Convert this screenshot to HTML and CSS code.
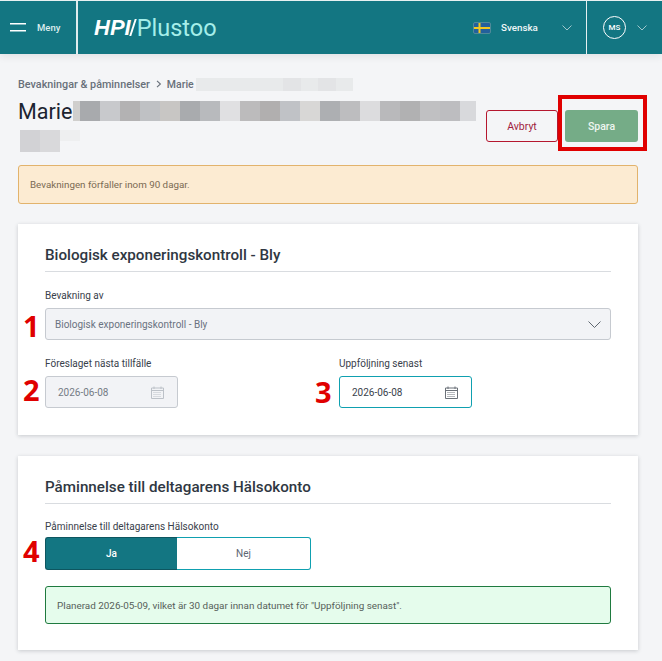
FILE: index.html
```html
<!DOCTYPE html>
<html lang="sv">
<head>
<meta charset="utf-8">
<title>Bevakning</title>
<link rel="stylesheet" href="styles.css">
</head>
<body>
<header class="topbar">
  <button class="menu">
    <svg class="burger" width="16" height="9" viewBox="0 0 16 9"><path d="M0 .75h16M0 7.75h16" stroke="#fff" stroke-width="1.5"/></svg>
    <span>Meny</span>
  </button>
  <div class="logo"><span class="hpi">HPI</span><span class="slash"></span><span class="plustoo">Plustoo</span></div>
  <div class="lang">
    <svg class="flag" width="18" height="12" viewBox="0 0 18 12"><rect x=".5" y=".5" width="17" height="11" rx="1.5" fill="#23609c" stroke="#4f8a99"/><path d="M1 6h16M6.500 1v10" stroke="#f2c81e" stroke-width="2"/></svg>
    <span>Svenska</span>
    <svg class="chev" width="10" height="6" viewBox="0 0 10 6"><path d="M.5.500l4.500 4.500 4.500-4.500" fill="none" stroke="#9fc7cc"/></svg>
  </div>
  <div class="user">
    <span class="avatar">MS</span>
    <svg class="chev" width="10" height="6" viewBox="0 0 10 6"><path d="M.5.500l4.500 4.500 4.500-4.500" fill="none" stroke="#9fc7cc"/></svg>
  </div>
</header>

<main class="page">
  <nav class="crumbs">
    <span>Bevakningar &amp; påminnelser</span>
    <svg width="6" height="8" viewBox="0 0 6 8"><path d="M1 .8l3.400 3.200L1 7.200" fill="none" stroke="#68707a" stroke-width="1.100"/></svg>
    <span class="crumb-name">Marie</span>
    <span class="mosaic crumb-mosaic"><i></i><i></i><i></i><i></i><i></i><i></i><i></i><i></i><i></i></span>
  </nav>

  <div class="titlerow">
    <h1>
      <span class="name">Marie</span>
      <span class="mosaic title-mosaic"><i></i><i></i><i></i><i></i><i></i><i></i><i></i><i></i><i></i><i></i><i></i><i></i><i></i><i></i><i></i><i></i><i></i><i></i><i></i><i></i></span>
      <span class="mosaic second-mosaic"><i></i><i></i><i></i></span>
    </h1>
    <div class="actions">
      <button class="btn cancel">Avbryt</button>
      <button class="btn save">Spara</button>
      <span class="redbox"></span>
    </div>
  </div>

  <div class="alert warn">Bevakningen förfaller inom 90 dagar.</div>

  <section class="card first">
    <h2>Biologisk exponeringskontroll - Bly</h2>
    <div class="field">
      <label>Bevakning av</label>
      <div class="control select">
        <span>Biologisk exponeringskontroll - Bly</span>
        <svg width="13" height="7" viewBox="0 0 13 7"><path d="M.5.500l6 6 6-6" fill="none" stroke="#5f6770"/></svg>
        <b class="mark m1">1</b>
      </div>
    </div>
    <div class="dates">
      <div class="field">
        <label>Föreslaget nästa tillfälle</label>
        <div class="control date disabled">
          <span>2026-06-08</span>
          <svg class="cal" width="13" height="13" viewBox="0 0 13 13"><path d="M.5 2h12v10.500h-12zM.5 4.500h12M3 .5v2.500M10 .5v2.500" fill="none" stroke="currentColor"/><path d="M2.500 6.500h8M2.500 8.500h8M2.500 10.500h8" stroke="currentColor" stroke-dasharray="1 1"/></svg>
          <b class="mark m2">2</b>
        </div>
      </div>
      <div class="field">
        <label>Uppföljning senast</label>
        <div class="control date active">
          <span>2026-06-08</span>
          <svg class="cal" width="13" height="13" viewBox="0 0 13 13"><path d="M.5 2h12v10.500h-12zM.5 4.500h12M3 .5v2.500M10 .5v2.500" fill="none" stroke="currentColor"/><path d="M2.500 6.500h8M2.500 8.500h8M2.500 10.500h8" stroke="currentColor" stroke-dasharray="1 1"/></svg>
          <b class="mark m3">3</b>
        </div>
      </div>
    </div>
  </section>

  <section class="card second">
    <h2>Påminnelse till deltagarens Hälsokonto</h2>
    <div class="field">
      <label class="tight">Påminnelse till deltagarens Hälsokonto</label>
      <div class="toggle">
        <button class="on">Ja</button>
        <button class="off">Nej</button>
        <b class="mark m4">4</b>
      </div>
    </div>
    <div class="alert ok">Planerad 2026-05-09, vilket är 30 dagar innan datumet för "Uppföljning senast".</div>
  </section>
</main>
</body>
</html>
```
FILE: styles.css
```css
* { box-sizing: border-box; }
html, body { margin: 0; padding: 0; }
body {
  width: 662px;
  height: 661px;
  overflow: hidden;
  background: #f4f5f7;
  color: #3f4650;
  font-family: Roboto, "Noto Sans", sans-serif;
  font-size: 10px;
}
button { font-family: inherit; cursor: pointer; }

.topbar {
  height: 54px;
  display: flex;
  align-items: center;
  background: #137682;
  border-top: 1px solid #e8f1f2;
  color: #fff;
  box-shadow: 0 2px 8px rgba(30, 40, 50, .1);
}
.menu {
  width: 76px;
  height: 53px;
  flex: none;
  display: flex;
  align-items: center;
  gap: 11px;
  padding: 0 0 0 10px;
  background: none;
  border: 0;
  color: #dcedee;
  font-size: 9.500px;
  font-weight: 500;
}
.logo {
  height: 53px;
  flex: 1;
  display: flex;
  align-items: center;
  padding-left: 16px;
  border-left: 2px solid #dfecee;
}
.hpi {
  font: italic 700 22px "Liberation Sans", sans-serif;
  color: #fff;
}
.slash {
  width: 2px;
  height: 17px;
  margin: 0 3px 0 1px;
  background: #fff;
  transform: skewX(-18deg);
}
.plustoo {
  font-size: 23.500px;
  font-weight: 400;
  color: #a5eee9;
}
.lang {
  display: flex;
  align-items: center;
  width: 113px;
  height: 53px;
  flex: none;
  font-size: 9.800px;
  font-weight: 500;
  color: #f0f7f8;
}
.flag { margin-right: 10px; }
.lang .chev { margin-left: 24px; }
.user {
  width: 76px;
  height: 53px;
  flex: none;
  display: flex;
  align-items: center;
  padding-left: 16px;
  gap: 11px;
  border-left: 1px solid #e6f0f1;
}
.avatar {
  width: 23px;
  height: 23px;
  display: flex;
  align-items: center;
  justify-content: center;
  border: 1px solid #fff;
  border-radius: 50%;
  font-size: 8px;
  font-weight: 500;
}

.page { padding: 0 24px 0 18px; }
.crumbs {
  height: 14px;
  margin-top: 23px;
  display: flex;
  align-items: center;
  gap: 6px;
  font-size: 10.800px;
  font-weight: 500;
  color: #68707a;
}
.crumb-name { margin-left: -1px; font-size: 10.500px; }
.mosaic { display: flex; }
.mosaic i { display: block; height: 100%; width: 20px; flex: none; }
.crumb-mosaic { height: 13px; margin-left: -4px; }
.crumb-mosaic i { width: 17.500px; background: #e8eaeb; }
.crumb-mosaic i:nth-child(6), .crumb-mosaic i:nth-child(8) { background: #e3e4e6; }

.titlerow {
  display: flex;
  align-items: flex-start;
  justify-content: space-between;
  height: 68px;
  margin-top: 6px;
}
h1 {
  position: relative;
  margin: 0;
  width: 460px;
  height: 60px;
  font-size: 21.500px;
  font-weight: 400;
  line-height: 30px;
  color: #1c2430;
}
.name { position: absolute; left: 0; top: 0; }
.title-mosaic { position: absolute; left: 55px; top: 4px; height: 20px; }
.title-mosaic::before { content: ""; width: 7px; background: #d0cfcd; }
.title-mosaic i:nth-child(1) { background: #a8aaad; }
.title-mosaic i:nth-child(2) { background: #c8c9cc; }
.title-mosaic i:nth-child(3) { background: #b3b2b3; }
.title-mosaic i:nth-child(4) { background: #bfc1c4; }
.title-mosaic i:nth-child(5) { background: #c8c6c4; }
.title-mosaic i:nth-child(6) { background: #a9abae; }
.title-mosaic i:nth-child(7) { background: #b8babd; }
.title-mosaic i:nth-child(8) { background: #e0e0e2; }
.title-mosaic i:nth-child(9) { background: #bcbbbc; }
.title-mosaic i:nth-child(10) { background: #b1afaf; }
.title-mosaic i:nth-child(11) { background: #c0c2c6; }
.title-mosaic i:nth-child(12) { background: #d8d7d6; }
.title-mosaic i:nth-child(13) { background: #adafb2; }
.title-mosaic i:nth-child(14) { background: #bdbdbf; }
.title-mosaic i:nth-child(15) { background: #dcdcde; }
.title-mosaic i:nth-child(16) { background: #b9b9bb; }
.title-mosaic i:nth-child(17) { background: #b1b1b2; }
.title-mosaic i:nth-child(18) { background: #c0c0c2; }
.title-mosaic i:nth-child(19) { background: #bdbdc0; }
.title-mosaic i:nth-child(20) { background: #d8d9dc; width: 16px; }
.second-mosaic { position: absolute; left: 2px; top: 33px; height: 22px; }
.second-mosaic i:nth-child(1) { background: #d2d2d5; }
.second-mosaic i:nth-child(2) { background: #d9d9db; }
.second-mosaic i:nth-child(3) { background: #eeeff0; height: 11px; }

.actions {
  position: relative;
  display: flex;
  gap: 7px;
  margin-top: 13px;
}
.btn {
  width: 73px;
  height: 32px;
  border-radius: 3px;
  font-size: 10.500px;
  padding: 0;
}
.cancel { width: 72px; background: transparent; border: 1px solid #b5172f; color: #a01c3e; font-weight: 400; }
.save { background: #75ac87; border: 0; color: #eef6f0; font-weight: 500; }
.redbox {
  position: absolute;
  left: 72px;
  top: -15px;
  width: 89px;
  height: 56px;
  border: 4px solid #e00000;
}

.alert {
  border-radius: 3px;
  font-size: 9.900px;
  display: flex;
  align-items: center;
}
.warn {
  height: 39px;
  padding-left: 11px;
  background: #fcebd2;
  border: 1px solid #e2b36c;
  color: #7a6a52;
  font-size: 9.800px;
}
.card {
  background: #fff;
  padding: 0 27px;
  box-shadow: 0 1px 4px rgba(40, 50, 60, .22);
}
.first { height: 211px; margin-top: 20px; padding-top: 19px; }
.second { height: 194px; margin-top: 21px; padding-top: 19px; }
h2 {
  margin: 0;
  height: 29px;
  border-bottom: 1px solid #d9dce0;
  font-size: 15.200px;
  font-weight: 500;
  line-height: 24px;
  color: #2f3742;
}
label {
  display: block;
  height: 23px;
  padding-top: 4px;
  font-size: 10px;
  line-height: 14px;
  color: #39414b;
}
.first > .field { margin-top: 13px; }
.control {
  position: relative;
  height: 32px;
  display: flex;
  align-items: center;
  justify-content: space-between;
  border-radius: 3px;
  font-size: 10px;
}
.select {
  padding: 0 9px 0 9px;
  background: #f2f3f6;
  border: 1px solid #c6cad0;
  color: #6a7280;
}
.dates { display: flex; gap: 161px; margin-top: 13px; }
.date { width: 133px; padding: 0 13px 0 12px; }
.disabled { background: #f2f3f6; border: 1px solid #c6cad0; color: #747b85; }
.disabled .cal { color: #bcc1c8; }
.active { background: #fff; border: 1px solid #0fa0b0; color: #3a424c; }
.active .cal { color: #6b7178; }
.mark {
  position: absolute;
  font-family: "Noto Sans", sans-serif;
  font-size: 29px;
  font-weight: 700;
  line-height: 30px;
  color: #e00000;
}
.m1 { left: -23px; top: 2px; }
.m2 { left: -23px; top: -2px; }
.m3 { left: -25px; top: 0; }
.m4 { left: -22px; top: -1px; }

.second .field { margin-top: 12px; }
.tight { height: 21px; padding-top: 4px; }
.toggle {
  position: relative;
  width: 266px;
  height: 33px;
  display: flex;
}
.toggle button {
  height: 33px;
  padding: 0;
  font-size: 10px;
}
.on {
  width: 132px;
  background: #137682;
  border: 1px solid #0d5660;
  border-right: 0;
  border-radius: 3px 0 0 3px;
  color: #fff;
  font-weight: 500;
}
.off {
  width: 134px;
  background: #fff;
  border: 1px solid #0fa0b0;
  border-left: 0;
  border-radius: 0 3px 3px 0;
  color: #5d6672;
}
.ok {
  height: 38px;
  margin-top: 16px;
  padding-left: 11px;
  background: #e5fcec;
  border: 1px solid #1f7a3f;
  color: #566059;
}
```
